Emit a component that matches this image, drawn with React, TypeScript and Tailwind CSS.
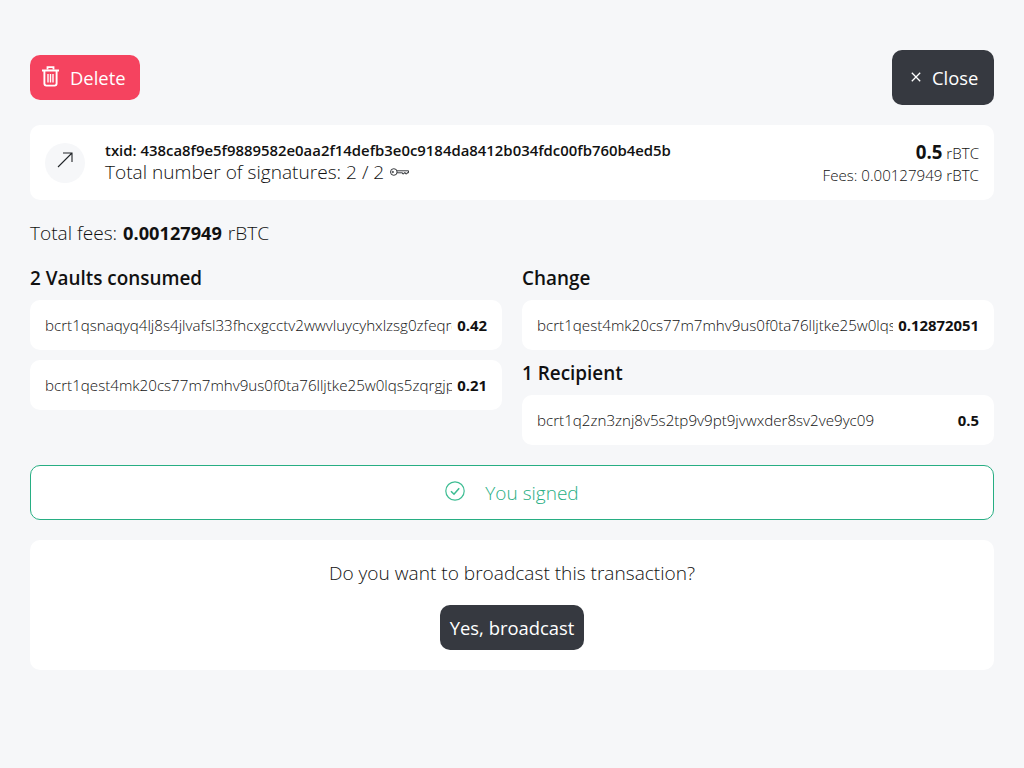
import React from "react";

function Row({ addr, amount }: { addr: string; amount: string }) {
  return (
    <div className="h-[50px] bg-white rounded-[10px] px-[15px] flex items-center justify-between">
      <div className="min-w-0 flex-1 overflow-hidden whitespace-nowrap text-[15.15px] font-light text-[#111]">{addr}</div>
      <div className="pl-[5px] text-[14.9px] font-bold text-[#111] shrink-0">{amount}</div>
    </div>
  );
}

export default function App() {
  return (
    <div className="min-h-[768px] bg-[#f6f7f9] px-[30px] pt-[50px] text-[#111] font-['Open_Sans',sans-serif] font-light">
      <div className="flex items-center justify-between h-[55px]">
        <button className="h-[45px] w-[110px] rounded-[10px] bg-[#f5435f] text-white flex items-center pl-[12px] text-[18.4px] font-normal">
          <svg width="17" height="21" viewBox="0 0 17 21" className="mr-[11px] mb-[3px]" fill="none" stroke="white">
            <path d="M0.5 4.5h16" strokeWidth="2.2" strokeLinecap="round" />
            <path d="M5.5 3.5V1.2h6v2.3" strokeWidth="1.8" />
            <path d="M2.4 5v12.6c0 1.2 .8 2 2 2h8.2c1.2 0 2-.8 2-2V5" strokeWidth="1.9" />
            <path d="M6 8v8.5M8.5 8v8.5M11 8v8.5" strokeWidth="1.4" />
          </svg>
          <span className="pt-[1px]">Delete</span>
        </button>
        <button className="h-[55px] w-[102px] rounded-[10px] bg-[#363940] text-white flex items-center pl-[19px] text-[18.4px] font-normal">
          <svg width="10" height="10" viewBox="0 0 10 10" className="mr-[11px] mb-[1px]" stroke="white" strokeWidth="1.3">
            <path d="M.8.8l8.4 8.4M9.2.8L.8 9.2" />
          </svg>
          <span className="pt-[1px]">Close</span>
        </button>
      </div>

      <div className="mt-[20px] h-[75px] bg-white rounded-[10px] px-[15px] flex items-center">
        <div className="w-[40px] h-[40px] rounded-full bg-[#f6f7f9] flex items-center justify-center shrink-0">
          <svg width="16" height="16" viewBox="0 0 16 16" className="mb-[5px]" fill="none" stroke="#212529" strokeWidth="1.1">
            <path d="M1 15L15 1M6 1h9v9" />
          </svg>
        </div>
        <div className="ml-[20px] flex-1 min-w-0 pb-[2px]">
          <div className="text-[14.9px] leading-[20px] font-semibold text-[#111]">txid: 438ca8f9e5f9889582e0aa2f14defb3e0c9184da8412b034fdc00fb760b4ed5b</div>
          <div className="text-[19.1px] leading-[24px] flex items-center">
            Total number of signatures: 2 / 2
            <svg width="19" height="8" viewBox="0 0 19 8" className="ml-[6px]" fill="none" stroke="#212529" strokeWidth="0.9">
              <circle cx="3.8" cy="4" r="3.3" />
              <circle cx="2.8" cy="4" r="0.7" />
              <path d="M7 2.8h11.5v2H17v1h-1.5v-1H14v1h-1.5v-1H7" />
            </svg>
          </div>
        </div>
        <div className="text-right shrink-0">
          <div className="leading-[24px] text-[15.1px]">
            <span className="text-[18.7px] font-bold text-[#111]">0.5</span> rBTC
          </div>
          <div className="text-[15.1px] leading-[20px]">Fees: 0.00127949 rBTC</div>
        </div>
      </div>

      <div className="mt-[19px] h-[28px] text-[19.1px] leading-[28px]">
        Total fees: <span className="font-bold text-[18.2px] text-[#111] ml-[1px] mr-[1px]">0.00127949</span> rBTC
      </div>

      <div className="mt-[18px] grid grid-cols-2 gap-x-[20px]">
        <div>
          <div className="h-[26px] text-[18.9px] leading-[26px] font-semibold text-[#111]">2 Vaults consumed</div>
          <div className="mt-[9px] flex flex-col gap-[10px]">
            <Row addr="bcrt1qsnaqyq4lj8s4jlvafsl33fhcxgcctv2wwvluycyhxlzsg0zfeqrqsjvkmg" amount="0.42" />
            <Row addr="bcrt1qest4mk20cs77m7mhv9us0f0ta76lljtke25w0lqs5zqrgjpqsjvkmgxlzs" amount="0.21" />
          </div>
        </div>
        <div>
          <div className="h-[26px] text-[18.9px] leading-[26px] font-semibold text-[#111]">Change</div>
          <div className="mt-[9px]">
            <Row addr="bcrt1qest4mk20cs77m7mhv9us0f0ta76lljtke25w0lqs5zqrgjpqsjvkmgxlzs" amount="0.12872051" />
          </div>
          <div className="mt-[10px] h-[26px] text-[18.9px] leading-[26px] font-semibold text-[#111]">1 Recipient</div>
          <div className="mt-[9px]">
            <Row addr="bcrt1q2zn3znj8v5s2tp9v9pt9jvwxder8sv2ve9yc09" amount="0.5" />
          </div>
        </div>
      </div>

      <div className="mt-[20px] h-[55px] bg-white rounded-[10px] border border-[#27ae83] flex items-center justify-center text-[19px] text-[#27ae83]">
        <svg width="20" height="20" viewBox="0 0 20 20" className="mr-[20px] mb-[3px]" fill="none" stroke="#3ebd93" strokeWidth="1.2">
          <circle cx="10" cy="10" r="9.2" />
          <path d="M6 10.2l3 3 5.2-6" strokeWidth="1.6" />
        </svg>
        <span className="font-light text-[#27ae83] pt-[1px]">You signed</span>
      </div>

      <div className="mt-[20px] h-[130px] bg-white rounded-[10px] flex flex-col items-center pt-[20px]">
        <div className="text-[19.1px] leading-[26px]">Do you want to broadcast this transaction?</div>
        <button className="mt-[19px] h-[45px] px-[10px] rounded-[10px] bg-[#363940] text-white text-[18.4px] font-normal">Yes, broadcast</button>
      </div>
    </div>
  );
}
